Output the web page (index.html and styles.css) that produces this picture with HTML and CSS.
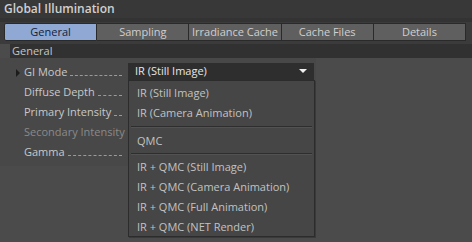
FILE: index.html
```html
<!DOCTYPE html>
<html lang="en">
<head>
    <meta charset="UTF-8">
    <title>Global Illumination</title>
    <link rel="stylesheet" href="styles.css">
</head>
<body>
    <div class="panel">
        <div class="title">Global Illumination</div>
        <div class="tabs">
            <div class="tab active">General</div>
            <div class="tab">Sampling</div>
            <div class="tab">Irradiance Cache</div>
            <div class="tab">Cache Files</div>
            <div class="tab">Details</div>
        </div>
        <div class="section">General</div>
        <div class="fields">
            <div class="row">
                <div class="label"><span class="arrow"></span><span class="name">GI Mode</span><span class="dots"></span></div>
                <div class="combo">
                    <div class="select">IR (Still Image)<span class="caret"></span></div>
                    <div class="menu">
                        <div class="item">IR (Still Image)</div>
                        <div class="item">IR (Camera Animation)</div>
                        <div class="sep"></div>
                        <div class="item">QMC</div>
                        <div class="sep tight"></div>
                        <div class="item">IR + QMC (Still Image)</div>
                        <div class="item">IR + QMC (Camera Animation)</div>
                        <div class="item">IR + QMC (Full Animation)</div>
                        <div class="item">IR + QMC (NET Render)</div>
                    </div>
                </div>
            </div>
            <div class="row">
                <div class="label"><span class="name">Diffuse Depth</span><span class="dots"></span></div>
            </div>
            <div class="row">
                <div class="label"><span class="name">Primary Intensity</span><span class="dots"></span></div>
            </div>
            <div class="row disabled">
                <div class="label"><span class="name">Secondary Intensity</span></div>
            </div>
            <div class="row">
                <div class="label"><span class="name">Gamma</span><span class="dots"></span></div>
            </div>
        </div>
    </div>
</body>
</html>
```

FILE: styles.css
```css
body {
    margin: 0;
    background: #4b4b4b;
    font-family: "Open Sans", "Noto Sans", sans-serif;
    font-size: 11px;
    color: #c8c8c8;
}
.panel {
    width: 472px;
    height: 242px;
    overflow: hidden;
}
.title {
    height: 18px;
    line-height: 18px;
    padding-left: 4px;
    background: #383838;
    color: #d0d0d0;
    font-size: 12px;
    font-weight: 600;
    border-bottom: 4px solid #333333;
}
.tabs {
    display: flex;
    background: #3b3b3b;
    padding: 1px 6px 3px 4px;
}
.tab {
    flex: 1;
    height: 16px;
    line-height: 16px;
    text-align: center;
    background: #5f5f5f;
    color: #cfcfcf;
    border: 1px solid #2a2a2a;
    border-left: none;
    font-size: 11px;
}
.tab:first-child {
    border-left: 1px solid #2a2a2a;
}
.tab.active {
    background: #8fa9d4;
    color: #14213d;
    border-radius: 2px 0 0 2px;
}
.section {
    margin-left: 10px;
    height: 14px;
    line-height: 14px;
    padding-left: 2px;
    background: #313131;
    color: #c4c4c4;
    font-size: 11px;
}
.fields {
    padding: 3px 0 5px 6px;
    background: #484848;
    width: 310px;
}
.row {
    display: flex;
    align-items: center;
    height: 20px;
}
.label {
    width: 122px;
    flex-shrink: 0;
    display: flex;
    align-items: center;
    padding-left: 18px;
    position: relative;
    box-sizing: border-box;
}
.arrow {
    position: absolute;
    left: 10px;
    top: 5px;
    border-top: 4px solid transparent;
    border-bottom: 4px solid transparent;
    border-left: 4px solid #1c1c1c;
}
.name {
    white-space: nowrap;
    flex-shrink: 0;
}
.dots {
    flex: 1;
    margin: 0 6px 0 3px;
    height: 9px;
    border-bottom: 1px dashed #9a9a9a;
}
.row.disabled {
    color: #8a8a8a;
}
.combo {
    position: relative;
}
.select {
    width: 179px;
    height: 17px;
    line-height: 16px;
    padding-left: 7px;
    background: #2e2e2e;
    color: #e6e6e6;
    position: relative;
}
.caret {
    position: absolute;
    right: 7px;
    top: 6px;
    border-left: 4px solid transparent;
    border-right: 4px solid transparent;
    border-top: 4px solid #f0f0f0;
}
.menu {
    position: absolute;
    left: 0;
    top: 17px;
    width: 187px;
    height: 157px;
    background: #464646;
    border: 1px solid #2c2c2c;
    box-shadow: 1px 1px 0 #3a3a3a;
    padding-top: 2px;
    box-sizing: border-box;
    z-index: 2;
}
.item {
    height: 20px;
    line-height: 20px;
    padding-left: 8px;
    color: #c2c2c2;
}
.sep {
    height: 1px;
    background: #2e2e2e;
    margin: 3px 2px 3px 2px;
    border-bottom: 1px solid #525252;
}
.sep.tight {
    margin: 2px 2px 2px 2px;
}
```
